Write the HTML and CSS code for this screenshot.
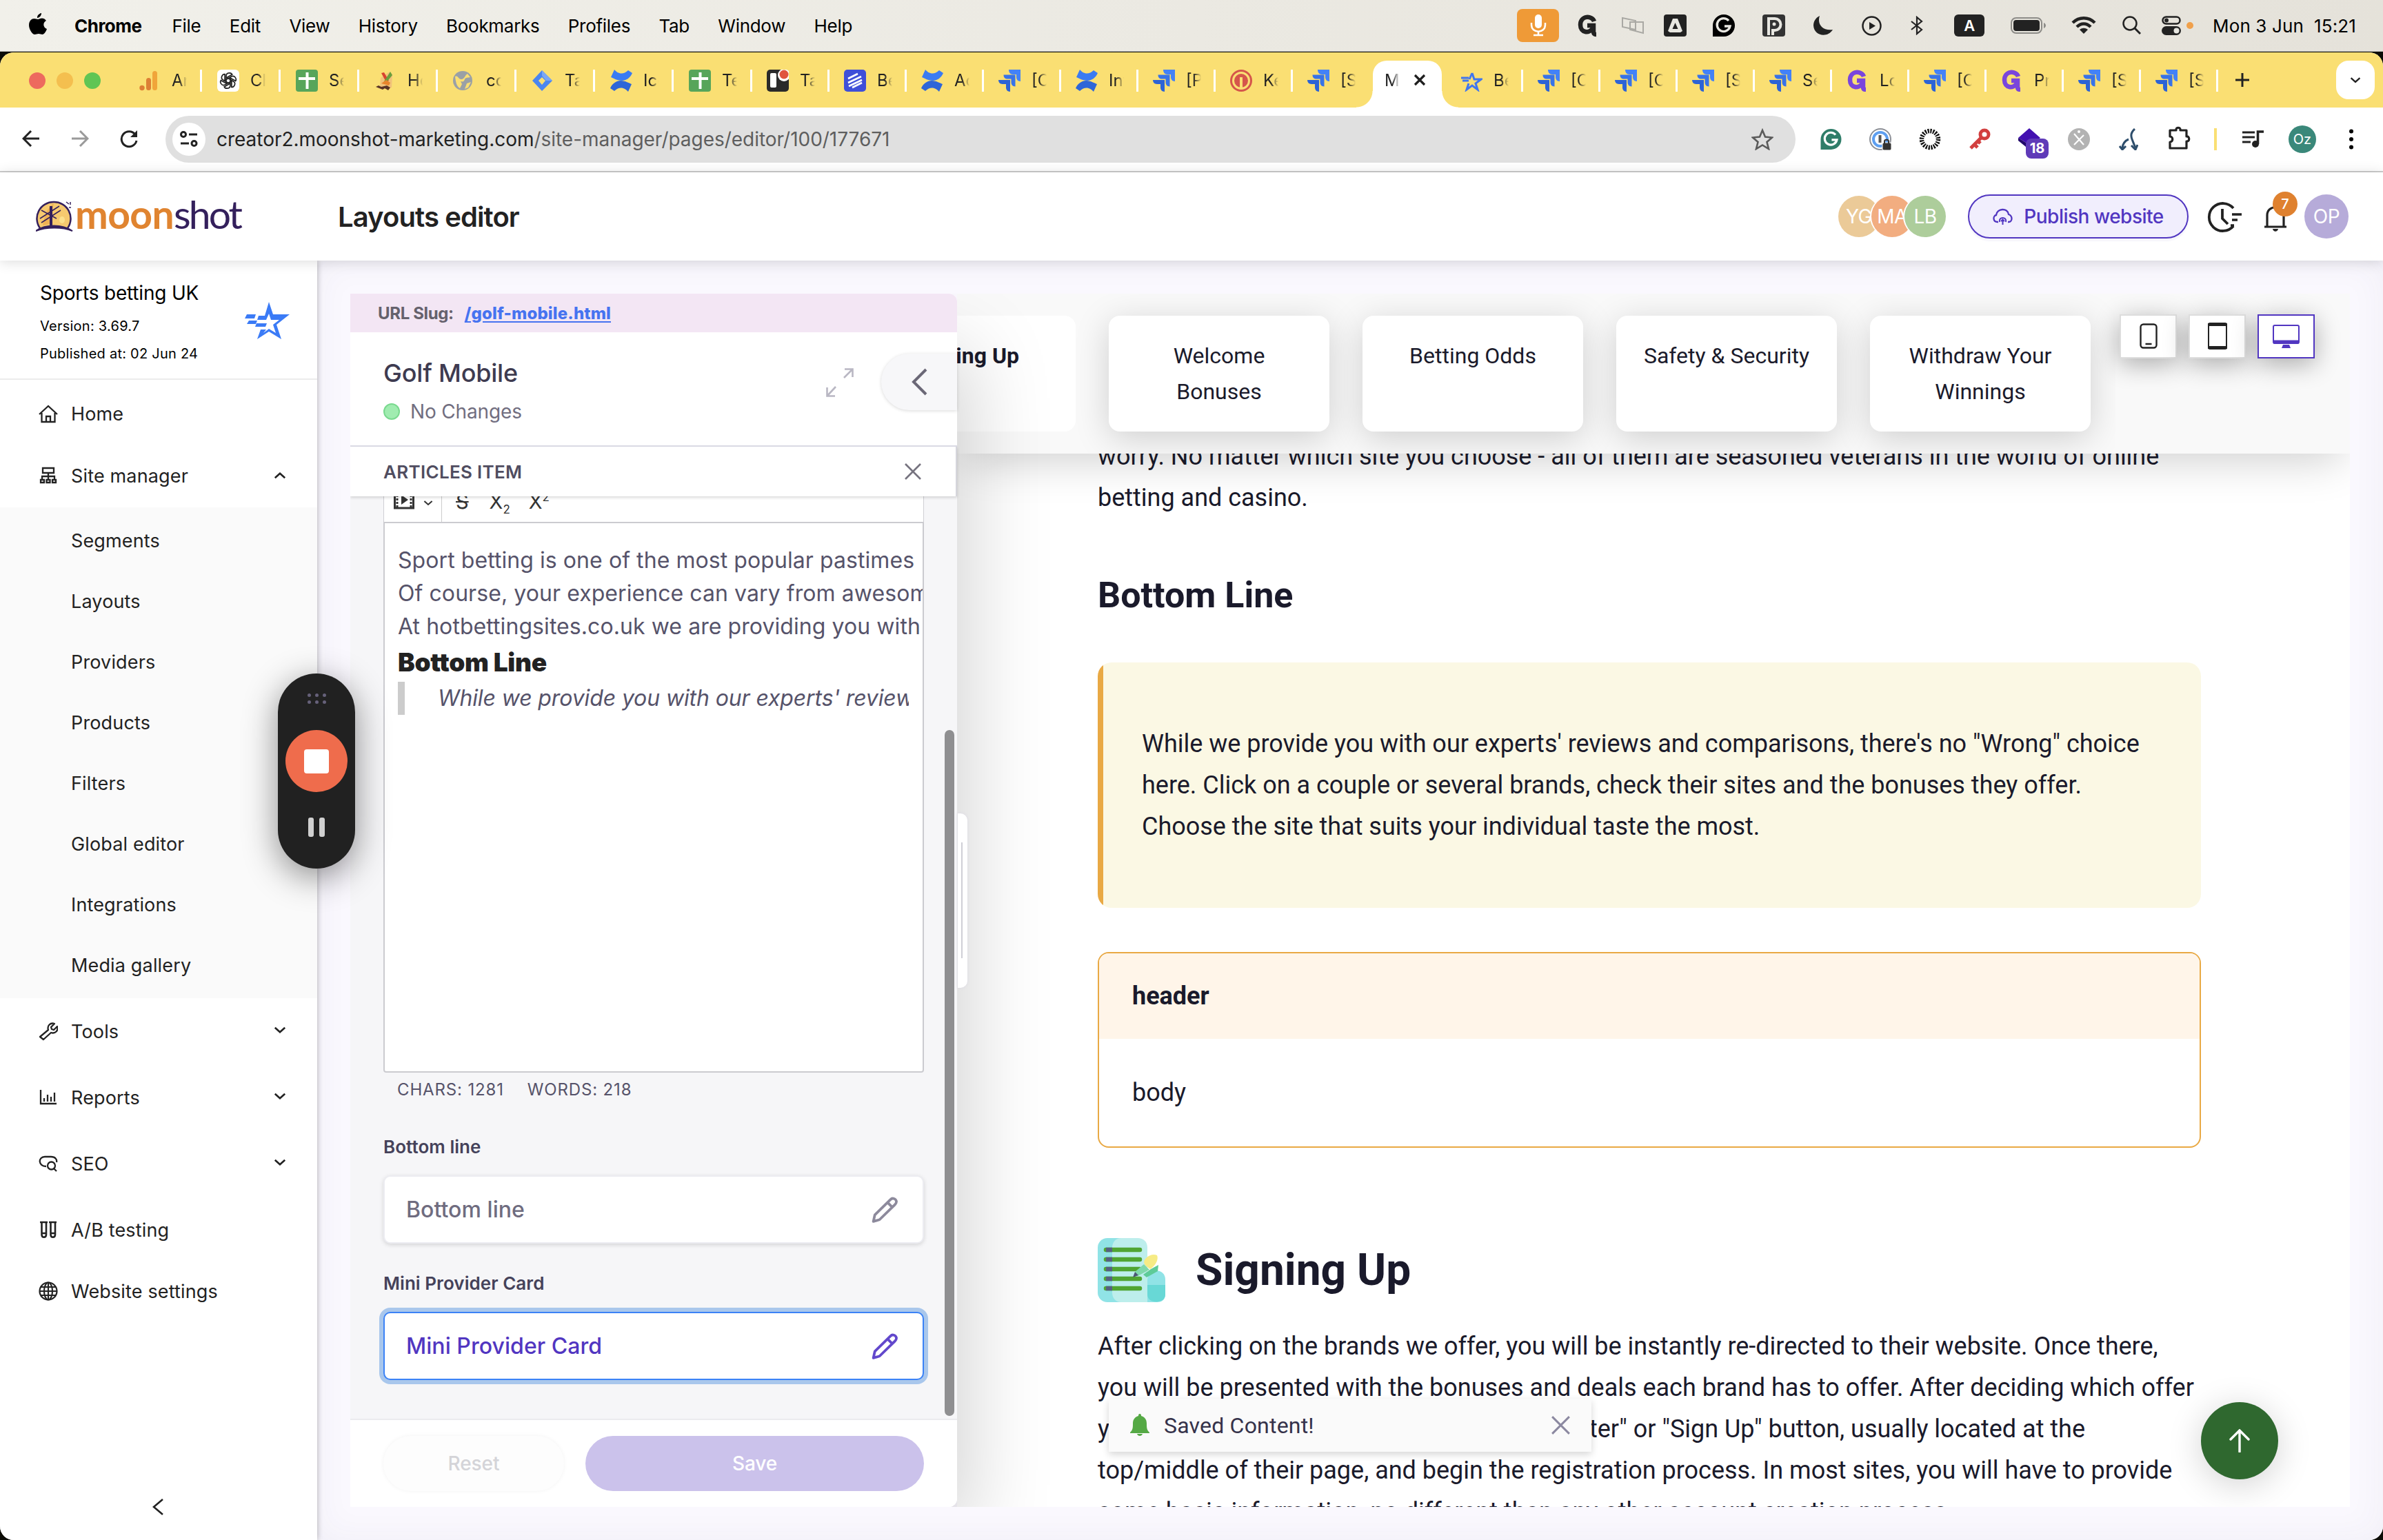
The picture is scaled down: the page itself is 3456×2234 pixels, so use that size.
FILE: index.html
```html
<!DOCTYPE html>
<html lang="en">
<head>
  <meta charset="UTF-8">
  <meta name="viewport" content="width=device-width, initial-scale=1">
  <title>Moonshot | Layouts editor</title>
  <link rel="stylesheet" href="styles.css">
</head>
<body>

  <!-- shared icons -->
  <svg class="defs" aria-hidden="true">
    <symbol id="f-analytics" viewBox="0 0 32 32"><rect x="20" y="2" width="7" height="28" rx="3.500" fill="#f0a53a"/><rect x="11" y="12" width="7" height="18" rx="3.500" fill="#dd7f35"/><circle cx="5" cy="26.500" r="3.700" fill="#dd7f35"/></symbol>
    <symbol id="f-gpt" viewBox="0 0 32 32"><rect width="32" height="32" rx="6" fill="#fff"/><g fill="none" stroke="#222" stroke-width="1.700"><path id="petal" d="M13 20V9.500c0-6 8-6 9-1.500M13 12l8-4.500"/><use href="#petal" transform="rotate(60 16 16)"/><use href="#petal" transform="rotate(120 16 16)"/><use href="#petal" transform="rotate(180 16 16)"/><use href="#petal" transform="rotate(240 16 16)"/><use href="#petal" transform="rotate(300 16 16)"/></g></symbol>
    <symbol id="f-sheets" viewBox="0 0 32 32"><rect width="32" height="32" rx="4" fill="#57a55a"/><path d="M4 13h24M16.500 4v24" stroke="#fff" stroke-width="4"/></symbol>
    <symbol id="f-paint" viewBox="0 0 32 32"><path d="M9 12l13-9 4 4-1 19-8 2-9-3z" fill="#f1c27a"/><path d="M10 5l4-1 7 12-4 2z" fill="#d8432f"/><path d="M23 3l3 5-9 11-3-2z" fill="#6a9f3c"/><path d="M10 20l7-5 6 4-2 4z" fill="#e8842c"/><path d="M2 25l4-2 4 2 8-2 5 3-3 4-5-3-3 2z" fill="#5a3426"/></symbol>
    <symbol id="f-globe" viewBox="0 0 32 32"><circle cx="14" cy="16" r="14" fill="#9aa0a6"/><path d="M3 10c5-2 4 4 9 4s5-6 9-8l4 5c-3 1-7 0-8 3s-2 4-6 3l2 4-3 6C5 24 4 18 3 10zM20 20l6-2-4 8-5 2z" fill="#fadf73"/></symbol>
    <symbol id="f-diamond" viewBox="0 0 32 32"><path d="M15 1l15 15-15 15L1 16z" fill="#4a86f0"/><path d="M15 1l15 15h-9l-6-7z" fill="#7ba7f5"/><path d="M15 11l5 5-5 6-5-6z" fill="#fadf73"/></symbol>
    <symbol id="f-conf" viewBox="0 0 32 32"><path d="M6 0c4 5 12 9 20 1l6 4c-3 7-9 11-15 11C10 16 4 12 1 11z" fill="#3a7bf2"/><path d="M26 32c-4-5-12-9-20-1l-6-4c3-7 9-11 15-11 7 0 13 4 16 5z" fill="#2e66d8"/></symbol>
    <symbol id="f-trello" viewBox="0 0 32 32"><rect width="32" height="32" rx="5" fill="#2a2a2a"/><rect x="5" y="5" width="9" height="21" rx="2" fill="#fff"/><circle cx="25" cy="8" r="9" fill="#fff"/><circle cx="25" cy="7" r="6.500" fill="#e0543f"/></symbol>
    <symbol id="f-blue" viewBox="0 0 32 32"><rect width="32" height="32" rx="5" fill="#3f4fd8"/><path d="M6 13l14-7M6 19l19-9M7 24l19-9M12 26l14-7" stroke="#fff" stroke-width="2.600"/></symbol>
    <symbol id="f-jira" viewBox="0 0 32 32"><path d="M15 0h17v17c-4 0-6-3-6-6V7h-5c-4 0-6-3-6-7z" fill="#4382f7"/><path d="M7.500 7.500h17v17c-4 0-6-3-6-6v-5h-5c-4 0-6-2-6-6z" fill="#3873e8"/><path d="M0 15h17v17c-4 0-6-3-6-6v-5H6c-4 0-6-3-6-6z" fill="#2c63d6"/></symbol>
    <symbol id="f-onepass" viewBox="0 0 32 32"><circle cx="16" cy="16" r="16" fill="#d5564b"/><circle cx="16" cy="16" r="11.500" fill="none" stroke="#fadf73" stroke-width="3"/><path d="M16 11v16" stroke="#fadf73" stroke-width="4"/></symbol>
    <symbol id="f-star" viewBox="0 0 32 32"><path d="M17 5l3 9h10l-8 6 3 9-8-6-8 6 3-9" fill="none" stroke="#3f76f0" stroke-width="3"/><path d="M17 5l-4 9M1 12h11M3 16h9" stroke="#3f76f0" stroke-width="3"/></symbol>
    <symbol id="f-g" viewBox="0 0 32 32"><path d="M25 10C22 1 5 1 5 15c0 12 13 13 18 5M15 16h9v9c0 3 1 4 4 4" fill="none" stroke="currentColor" stroke-width="6.500"/></symbol>
    <symbol id="chev" viewBox="0 0 20 12"><path d="M2 2.500l8 7 8-7" fill="none" stroke="currentColor" stroke-width="3"/></symbol>
    <symbol id="pencil" viewBox="0 0 36 36"><path d="M2.500 34l2-9L26 4c2.500-3 7-1.500 8 2 .5 2-.5 3.500-2 5L11 31.500zM22 8l7 7" fill="none" stroke="currentColor" stroke-width="3.600" stroke-linejoin="round"/></symbol>
    <symbol id="cross" viewBox="0 0 24 24"><path d="M1 1l22 22M23 1L1 23" fill="none" stroke="currentColor" stroke-width="2.600"/></symbol>
  </svg>

  <div class="menubar">
    <svg class="apple" viewBox="0 0 26 32"><path d="M18 0c.3 3-2.600 7-6 7C11.600 4 14.500.6 18 0zM13 9c1.400 0 3-1.500 6-1.500 2 0 4.500 1 6 3.500-5.500 3-4.500 10 1 12-1.500 4-4 8-6.500 8-2 0-3-1-5.500-1s-3.500 1-5.500 1C4.500 31 0 23 0 17.500 0 11 4 8 7.500 8 10 8 11.500 9 13 9z"/></svg>
    <b>Chrome</b><span>File</span><span>Edit</span><span>View</span><span>History</span><span>Bookmarks</span><span>Profiles</span><span>Tab</span><span>Window</span><span>Help</span>
    <div class="status">
      <div class="mic"><svg width="24" height="32" viewBox="0 0 24 32"><rect x="7" y="0" width="10" height="20" rx="5" fill="#fff"/><path d="M2 12v3c0 13 20 13 20 0v-3M12 25v5M5 30h14" fill="none" stroke="#fff" stroke-width="2.500"/></svg></div>
      <svg class="st-g" width="32" height="34"><use href="#f-g"/></svg>
      <svg class="st-screens" width="34" height="26" viewBox="0 0 34 26"><path d="M2 2l19 4v13l-19-4zM13 8h19v16l-19-5z" fill="none" stroke="#aaa9a4" stroke-width="2"/></svg>
      <svg class="st-a" width="33" height="32" viewBox="0 0 33 32"><rect width="33" height="32" rx="4" fill="#222"/><path d="M13 6h7l7 18-3 2H9l-3-2z" fill="#e8e7e1"/><path d="M16.500 12l4 9h-8z" fill="#222"/></svg>
      <svg class="st-gram" width="32" height="32" viewBox="0 0 32 32"><path d="M0 32V16a16 16 0 1 1 16 16z" fill="#000"/><path d="M23 9a9.500 9.500 0 1 0 2 8h-8" fill="none" stroke="#e8e7e1" stroke-width="3.400"/></svg>
      <svg class="st-p" width="33" height="32" viewBox="0 0 33 32"><rect width="33" height="32" rx="4" fill="#333"/><path d="M9 30V6h9a8 8 0 0 1 0 17h-3v7" fill="#333" stroke="#e8e7e1" stroke-width="4"/><circle cx="17" cy="14" r="2.500" fill="#e8e7e1"/></svg>
      <svg class="st-moon" width="28" height="28" viewBox="0 0 28 28"><path d="M9 0c-4 12 4 22 19 20C21 32 1 30 0 14 0 8 3 3 9 0z" fill="#222"/></svg>
      <svg class="st-play" width="29" height="29" viewBox="0 0 29 29"><circle cx="14.500" cy="14.500" r="13" fill="none" stroke="#222" stroke-width="2.500"/><path d="M11 9l9 5.500-9 5.500z" fill="#222"/></svg>
      <svg class="st-bt" width="18" height="28" viewBox="0 0 18 28"><path d="M1 8l15 12-7 6V2l7 6L1 20" fill="none" stroke="#222" stroke-width="2.200"/></svg>
      <div class="lang">A</div>
      <svg class="st-batt" width="52" height="24" viewBox="0 0 52 24"><rect x="1" y="1" width="44" height="22" rx="7" fill="none" stroke="#8d8c88" stroke-width="2"/><rect x="4" y="4" width="38" height="16" rx="4" fill="#222"/><path d="M48 8c4 2 4 6 0 8z" fill="#8d8c88"/></svg>
      <svg class="st-wifi" width="36" height="26" viewBox="0 0 36 26"><path d="M2 9c9-9 23-9 32 0M8 15c6-6 14-6 20 0" fill="none" stroke="#222" stroke-width="4.500"/><path d="M12 19c4-3 8-3 12 0l-6 6z" fill="#222"/></svg>
      <svg class="st-search" width="27" height="28" viewBox="0 0 27 28"><circle cx="11" cy="11" r="9.500" fill="none" stroke="#222" stroke-width="2.500"/><path d="M18 18l8 8" stroke="#222" stroke-width="3"/></svg>
      <svg class="st-control" width="28" height="28" viewBox="0 0 28 28"><rect x="1.500" y="1.500" width="25" height="10" rx="5" fill="none" stroke="#222" stroke-width="2.500"/><circle cx="7" cy="6.500" r="3" fill="#222"/><rect x="0" y="15" width="28" height="13" rx="6.500" fill="#222"/><circle cx="21.500" cy="21.500" r="4" fill="#e6e5df"/></svg>
      <i class="dot-orange"></i>
      <span class="clock">Mon 3 Jun&nbsp; 15:21</span>
    </div>
  </div>

  <div class="window">
    <div class="tabs">
      <div class="lights"><i class="red"></i><i class="yellow"></i><i class="green"></i></div>
      <div class="tab wide"><svg><use href="#f-analytics"/></svg><span>An</span></div>
      <div class="tab wide"><svg><use href="#f-gpt"/></svg><span>Ch</span></div>
      <div class="tab wide"><svg><use href="#f-sheets"/></svg><span>Se</span></div>
      <div class="tab wide"><svg><use href="#f-paint"/></svg><span>Ho</span></div>
      <div class="tab wide"><svg><use href="#f-globe"/></svg><span>co</span></div>
      <div class="tab wide"><svg><use href="#f-diamond"/></svg><span>Ta</span></div>
      <div class="tab wide"><svg><use href="#f-conf"/></svg><span>Ico</span></div>
      <div class="tab wide"><svg><use href="#f-sheets"/></svg><span>Te</span></div>
      <div class="tab"><svg><use href="#f-trello"/></svg><span>Ta</span></div>
      <div class="tab"><svg><use href="#f-blue"/></svg><span>Be</span></div>
      <div class="tab"><svg><use href="#f-conf"/></svg><span>Ac</span></div>
      <div class="tab"><svg><use href="#f-jira"/></svg><span>[C</span></div>
      <div class="tab"><svg><use href="#f-conf"/></svg><span>Int</span></div>
      <div class="tab"><svg><use href="#f-jira"/></svg><span>[P</span></div>
      <div class="tab"><svg><use href="#f-onepass"/></svg><span>Ke</span></div>
      <div class="tab no-sep"><svg><use href="#f-jira"/></svg><span>[S</span></div>
      <div class="tab active"><span>M</span><svg class="tab-x" viewBox="0 0 18 18"><path d="M2 2l14 14M16 2L2 16" stroke="#1f1f1f" stroke-width="3.200"/></svg></div>
      <div class="tab"><svg><use href="#f-star"/></svg><span>Be</span></div>
      <div class="tab"><svg><use href="#f-jira"/></svg><span>[C</span></div>
      <div class="tab"><svg><use href="#f-jira"/></svg><span>[C</span></div>
      <div class="tab"><svg><use href="#f-jira"/></svg><span>[S</span></div>
      <div class="tab"><svg><use href="#f-jira"/></svg><span>Se</span></div>
      <div class="tab g"><svg><use href="#f-g"/></svg><span>Lo</span></div>
      <div class="tab"><svg><use href="#f-jira"/></svg><span>[C</span></div>
      <div class="tab g"><svg><use href="#f-g"/></svg><span>Pr</span></div>
      <div class="tab"><svg><use href="#f-jira"/></svg><span>[S</span></div>
      <div class="tab"><svg><use href="#f-jira"/></svg><span>[S</span></div>
      <svg class="plus" viewBox="0 0 20 20"><path d="M10 0v20M0 10h20" stroke="#222" stroke-width="3"/></svg>
      <div class="tab-list"><svg width="16" height="10" viewBox="0 0 20 12"><use href="#chev"/></svg></div>
    </div>

    <div class="toolbar">
      <div class="nav-btns">
        <svg width="26" height="24" viewBox="0 0 26 24"><path d="M25 12H2M13 1L2 12l11 11" fill="none" stroke="#222" stroke-width="3"/></svg>
        <svg width="26" height="24" viewBox="0 0 26 24"><path d="M1 12h23M13 1l11 11-11 11" fill="none" stroke="#9a9a9a" stroke-width="3"/></svg>
        <svg width="26" height="26" viewBox="0 0 26 26"><path d="M24 15A11 11 0 1 1 22 6" fill="none" stroke="#222" stroke-width="3"/><path d="M25 0v10H15z" fill="#222"/></svg>
      </div>
      <div class="address">
        <div class="site-info"><svg width="26" height="24" viewBox="0 0 26 24"><path d="M13 5h12M1 18h12" stroke="#222" stroke-width="3"/><circle cx="5" cy="5" r="3.500" fill="none" stroke="#222" stroke-width="3"/><circle cx="20.500" cy="18" r="3.500" fill="none" stroke="#222" stroke-width="3"/></svg></div>
        <span class="url">creator2.moonshot-marketing.com<em>/site-manager/pages/editor/100/177671</em></span>
        <svg class="fav" width="32" height="32" viewBox="0 0 32 32"><path d="M16 3l4 9.500 10 1-7.500 6.500 2.500 10-9-5.500L7 30l2.500-10L2 13.500l10-1z" fill="none" stroke="#5b5b5b" stroke-width="2.600"/></svg>
      </div>
      <div class="exts">
        <svg width="31" height="30" viewBox="0 0 32 32"><path d="M0 32V16a16 16 0 1 1 16 16z" fill="#2f7d69"/><path d="M23 9a9.500 9.500 0 1 0 2 8h-8" fill="none" stroke="#fff" stroke-width="3.400"/></svg>
        <svg width="32" height="32" viewBox="0 0 32 32"><circle cx="16" cy="16" r="15" fill="#fff" stroke="#8c8f96" stroke-width="2"/><circle cx="16" cy="16" r="10" fill="none" stroke="#5e9ff0" stroke-width="4"/><path d="M15.500 10v11" stroke="#555" stroke-width="4"/><rect x="19" y="21" width="13" height="11" rx="2" fill="#333" stroke="#fff"/><path d="M22 22v-3c0-3 6-3 6 0v3" fill="none" stroke="#333" stroke-width="2"/></svg>
        <svg width="32" height="32" viewBox="0 0 32 32"><circle cx="16" cy="16" r="12" fill="none" stroke="#111" stroke-width="6.500" stroke-dasharray="2.200 1.570"/></svg>
        <svg width="32" height="32" viewBox="0 0 32 32"><circle cx="23" cy="9" r="6" fill="none" stroke="#d23f3f" stroke-width="5"/><path d="M18 14L3 29M8 23l5 5M13 18l4 4" stroke="#d23f3f" stroke-width="5"/></svg>
        <div class="ext-badge"><svg width="32" height="32" viewBox="0 0 32 32"><path d="M16 0l16 14-16 10L0 14z" fill="#4310b0"/><path d="M0 14l16 10v7L0 18z" fill="#22086b"/></svg><b>18</b></div>
        <svg width="32" height="32" viewBox="0 0 32 32"><circle cx="16" cy="16" r="16" fill="#b3b3b3"/><path d="M9 8l14 16M23 10L9 24" stroke="#fff" stroke-width="2.200"/><circle cx="16" cy="5" r="2" fill="#fff"/></svg>
        <svg class="ext-fork" width="28" height="32" viewBox="0 0 28 32"><path d="M23 1c-6 5-6 10-4 15s3 8 5 12M14 16C9 18 5 23 5 29" fill="none" stroke="#2d4d6b" stroke-width="3"/><path d="M1 26l4 5 5-5M18 25l6 6 3-7" fill="none" stroke="#2d4d6b" stroke-width="3"/></svg>
        <svg class="ext-puzzle" width="34" height="34" viewBox="0 0 34 34"><path d="M3 6h9c-1-5 7-5 6 0h9v9c5-1 5 8 0 7v10H3v-9c5 0 5-8 0-8z" fill="none" stroke="#222" stroke-width="3.200" stroke-linejoin="round"/></svg>
        <i class="ext-sep"></i>
        <svg class="ext-music" width="32" height="26" viewBox="0 0 32 26"><path d="M0 3h18M0 10h18M0 17h12" stroke="#222" stroke-width="3.200"/><circle cx="19" cy="20" r="5" fill="#222"/><path d="M22.500 20V2H31" fill="none" stroke="#222" stroke-width="3.600"/></svg>
        <div class="me">Oz</div>
        <svg class="ext-dots" width="6" height="30" viewBox="0 0 6 30"><circle cx="3" cy="3.500" r="3"/><circle cx="3" cy="15" r="3"/><circle cx="3" cy="26.500" r="3"/></svg>
      </div>
    </div>

    <header class="app-header">
      <div class="logo">
        <svg width="54" height="46" viewBox="0 0 54 46"><path d="M6 40A24 24 0 0 1 26 2a24 24 0 0 1 20 38" fill="#f6c96f" stroke="#34205c" stroke-width="2.500"/><path d="M26 4c-8 4-14 18-16 32l10-2z" fill="#e79a3c" opacity=".5"/><path d="M8 14L30 26M6 26l28-18M8 32L36 14" stroke="#34205c" stroke-width="1.500"/><path d="M22 8v28" stroke="#34205c" stroke-width="4"/><ellipse cx="38" cy="28" rx="4" ry="5" fill="#fde08c"/><path d="M0 44c14-10 38-10 53 0-14-6-38-6-53 0z" fill="#34205c" stroke="#34205c" stroke-width="2"/><path d="M44 2l4 3M50 2v4M48 10h3" stroke="#34205c" stroke-width="1.500"/></svg>
        <span class="moon">moon</span><span class="shot">shot</span>
      </div>
      <h1>Layouts editor</h1>
      <div class="header-right">
        <div class="avatars"><span class="av yg">YG</span><span class="av ma">MA</span><span class="av lb">LB</span></div>
        <button class="publish"><svg width="29" height="24" viewBox="0 0 29 24"><path d="M8 20H7C0 20 0 11 5 10 6 0 22-1 23 9c6 2 6 11 0 11h-1" fill="none" stroke="#5136c1" stroke-width="2.300"/><path d="M10 20c-2-8 11-8 9 0M14.500 24v-7M12 19l2.500-2.500L17 19" fill="none" stroke="#5136c1" stroke-width="2"/></svg>Publish website</button>
        <svg class="history" width="50" height="44" viewBox="0 0 50 44"><path d="M38 9A20 20 0 1 0 38 35" fill="none" stroke="#222" stroke-width="3.800"/><path d="M22 10v14l8 8" fill="none" stroke="#222" stroke-width="3.800"/><path d="M36 18h14M36 26h8M34 34h5" stroke="#222" stroke-width="3.600"/></svg>
        <div class="bell"><svg width="34" height="40" viewBox="0 0 34 40"><path d="M1 33h32M5 32V16C5 1 29 1 29 16v16" fill="none" stroke="#222" stroke-width="3.200"/><path d="M13 36h8c-1 5-7 5-8 0z" fill="#222"/></svg><b>7</b></div>
        <span class="av op">OP</span>
      </div>
    </header>

    <div class="app">
      <aside class="sidebar">
        <div class="site">
          <div>
            <p class="site-name">Sports betting UK</p>
            <p>Version: 3.69.7</p>
            <p>Published at: 02 Jun 24</p>
          </div>
          <svg width="66" height="56" viewBox="0 0 66 56"><path fill-rule="evenodd" d="M35 1l6 18h24L46 34l7 21-18-11-17 11 5-14h8l-4 5 8-6 10 6-4-12 9-7H38l-3-9-4 9H18l2-6h9zM17 32h15l-2 5H15z" fill="#3b7bf6"/><path d="M3 19h13l-2 6H0zM6 28h12l-2 5H3z" fill="#3b7bf6"/></svg>
        </div>
        <nav>
          <a class="item home"><svg viewBox="0 0 28 28"><path d="M1 15L14 3l13 12M4.500 13v13h19V13M11 26v-8h6v8" fill="none" stroke="#222" stroke-width="2.300"/></svg>Home</a>
          <a class="item manager"><svg viewBox="0 0 28 28"><path d="M6 3h16v7H6zM14 10v9M5 19v-4h18v4M3 20h5v4H3zM11.500 20h5v4h-5zM20 20h5v4h-5z" fill="none" stroke="#222" stroke-width="2.300"/></svg>Site manager<svg class="arrow up"><use href="#chev"/></svg></a>
          <div class="sub">
            <a>Segments</a><a>Layouts</a><a>Providers</a><a>Products</a><a>Filters</a><a>Global editor</a><a>Integrations</a><a>Media gallery</a>
          </div>
          <a class="item"><svg viewBox="0 0 28 28"><path d="M2 22L14 12c-2-6 3-11 9-9l-5 5 1 3 3 1 5-5c2 6-3 11-9 9L7 26z" fill="none" stroke="#222" stroke-width="2.300" stroke-linejoin="round"/></svg>Tools<svg class="arrow"><use href="#chev"/></svg></a>
          <a class="item"><svg viewBox="0 0 28 28"><path d="M3 3v20h23M8 20v-5M13 20v-10M18 20v-7M23 20V7" fill="none" stroke="#222" stroke-width="2.300"/></svg>Reports<svg class="arrow"><use href="#chev"/></svg></a>
          <a class="item"><svg viewBox="0 0 28 28"><path d="M11 18C-1 18-1 4 9 4h9c6 0 9 4 8 8" fill="none" stroke="#222" stroke-width="2.300"/><circle cx="18.500" cy="17" r="5.500" fill="none" stroke="#222" stroke-width="2.300"/><path d="M22 21l4 4" stroke="#222" stroke-width="2.300"/></svg>SEO<svg class="arrow"><use href="#chev"/></svg></a>
          <a class="item"><svg viewBox="0 0 28 28"><path d="M2 3h11M4.500 3v18c0 5 6.500 5 6.500 0V3M15 3h11M17.500 3v18c0 5 6.500 5 6.500 0V3M4.500 19h6.500M17.500 19h6.500" fill="none" stroke="#222" stroke-width="2.600"/></svg>A/B testing</a>
          <a class="item settings"><svg viewBox="0 0 28 28"><g fill="none" stroke="#222" stroke-width="2.200"><circle cx="14" cy="14" r="12.500"/><ellipse cx="14" cy="14" rx="6" ry="12.500"/><path d="M14 1v26M1 14h26M3 8h22M3 20h22"/></g></svg>Website settings</a>
        </nav>
        <svg class="collapse" width="16" height="24" viewBox="0 0 16 24"><path d="M15 1L2 12l13 11" fill="none" stroke="#222" stroke-width="2.600"/></svg>
      </aside>

      <main>
        <div class="workspace">
          <section class="editor">
            <div class="slug">URL Slug: <a>/golf-mobile.html</a></div>
            <div class="page-head">
              <div>
                <h2>Golf Mobile</h2>
                <p><i></i>No Changes</p>
              </div>
              <svg class="expand" width="40" height="42" viewBox="0 0 40 42"><path d="M26 14L39 1M27 1.500h11.500V13M14 27L1 41M1.500 28v12.500H13" fill="none" stroke="#b9b7c3" stroke-width="2.600"/></svg>
              <div class="fold"><svg width="24" height="40" viewBox="0 0 24 40"><path d="M22 2L4 20l18 18" fill="none" stroke="#6b6877" stroke-width="4"/></svg></div>
            </div>
            <div class="item-head"><span>ARTICLES ITEM</span><svg width="24" height="24"><use href="#cross"/></svg></div>
            <div class="form">
              <div class="rte-bar">
                <svg width="30" height="34" viewBox="0 0 30 34"><path d="M1.500 0v29h27V0" fill="none" stroke="#333" stroke-width="3"/><path d="M5 0v28M25 0v28" stroke="#333" stroke-width="3" stroke-dasharray="3 2"/><path d="M11 10l10 7-10 7z" fill="#333"/></svg>
                <svg class="rte-chev" width="14" height="9"><use href="#chev"/></svg>
                <i></i>
                <s>S</s>
                <span>X<sub>2</sub></span>
                <span>X<sup>2</sup></span>
              </div>
              <div class="rte">
                <p>Sport betting is one of the most popular pastimes</p>
                <p>Of course, your experience can vary from awesome</p>
                <p>At hotbettingsites.co.uk we are providing you with</p>
                <h3>Bottom Line</h3>
                <blockquote>While we provide you with our experts' reviews</blockquote>
              </div>
              <div class="counts"><span>CHARS: 1281</span><span>WORDS: 218</span></div>
              <label>Bottom line</label>
              <div class="pick">Bottom line<svg width="38" height="38"><use href="#pencil"/></svg></div>
              <label>Mini Provider Card</label>
              <div class="pick focus">Mini Provider Card<svg width="38" height="38"><use href="#pencil"/></svg></div>
              <i class="scroll"></i>
            </div>
            <div class="actions"><button class="reset">Reset</button><button class="save">Save</button></div>
            <div class="resizer"><i></i></div>
          </section>

          <section class="preview">
            <div class="toc">
              <div class="toc-list">
                <div class="toc-card current">Signing Up</div>
                <div class="toc-card">Welcome Bonuses</div>
                <div class="toc-card">Betting Odds</div>
                <div class="toc-card">Safety &amp; Security</div>
                <div class="toc-card">Withdraw Your Winnings</div>
              </div>
              <div class="devices">
                <div><svg width="26" height="38" viewBox="0 0 26 38"><rect x="1.500" y="1.500" width="23" height="34" rx="4" fill="none" stroke="#222" stroke-width="2.400"/><path d="M8.500 30h9" stroke="#222" stroke-width="2.500"/></svg></div>
                <div><svg width="28" height="40" viewBox="0 0 28 40"><rect x="1" y="1" width="26" height="37" rx="2" fill="#fff" stroke="#222" stroke-width="2"/><path d="M0 3h28M0 36h28" stroke="#222" stroke-width="4"/></svg></div>
                <div class="on"><svg width="40" height="36" viewBox="0 0 40 36"><rect x="1" y="2" width="37" height="26" rx="2" fill="#fff" stroke="#5136c1" stroke-width="2"/><path d="M1 26h37" stroke="#5136c1" stroke-width="5"/><path d="M15 30h9l2 5H13z" fill="#5136c1"/></svg></div>
              </div>
            </div>
            <article>
              <p class="first">worry. No matter which site you choose - all of them are seasoned veterans in the world of online<br>betting and casino.</p>
              <h3>Bottom Line</h3>
              <div class="quote">While we provide you with our experts' reviews and comparisons, there's no "Wrong" choice<br>here. Click on a couple or several brands, check their sites and the bonuses they offer.<br>Choose the site that suits your individual taste the most.</div>
              <div class="box"><div class="box-head">header</div><div class="box-body">body</div></div>
              <div class="title">
                <svg width="98" height="94" viewBox="0 0 98 94"><rect width="50" height="93" rx="14" fill="#90e3e6"/><path d="M34 0h24c8 0 14 5 14 14v79H34c-8 0-13-6-13-14V14C21 6 26 0 34 0z" fill="#bdeeec"/><path d="M72 93V60c0-17 26-17 26 0v22c0 8-6 11-12 11z" fill="#90e3e6"/><path d="M72 68h26v14c0 14-26 14-26 0z" fill="#68d8d6"/><path d="M12 17h49M12 31h49M12 45h49M12 59h49M12 73h49" stroke="#50a532" stroke-width="6.500" stroke-linecap="round"/><path d="M12 17h9M12 31h9M12 45h9M12 59h9M12 73h9" stroke="#566180" stroke-width="6.500"/><path d="M54 49l13-11 8 8-17 9z" fill="#7fd8ab"/><path d="M66 53l11-8 11-6-1 9-16 9z" fill="#5ecb98"/><path d="M76 45c-8-5-12-10-6-16 5-5 12-6 16-4 3 6-3 16-10 20z" fill="#f6eb85"/><path d="M51 57l3-8 5 5z" fill="#4b5674"/></svg>
                <h2>Signing Up</h2>
              </div>
              <p>After clicking on the brands we offer, you will be instantly re-directed to their website. Once there,<br>you will be presented with the bonuses and deals each brand has to offer. After deciding which offer<br><span class="covered">you</span>ter" or "Sign Up" button, usually located at the<br>top/middle of their page, and begin the registration process. In most sites, you will have to provide<br>some basic information, no different than any other account creation process.</p>
            </article>
            <div class="toast"><svg width="28" height="33" viewBox="0 0 28 33"><path d="M14 0c2 0 2 2 2 3 6 2 8 6 8 11 0 6 0 9 4 13v1H0v-1c4-4 4-7 4-13 0-5 2-9 8-11 0-1 0-3 2-3zM10 29h8c-1 4-7 4-8 0z" fill="#55a945"/></svg>Saved Content!<svg class="toast-x" width="27" height="27"><use href="#cross"/></svg></div>
            <div class="to-top"><svg width="30" height="34" viewBox="0 0 30 34"><path d="M15 33V2M2 15L15 2l13 13" fill="none" stroke="#fff" stroke-width="3.400" stroke-linecap="round"/></svg></div>
          </section>
        </div>
      </main>
    </div>
  </div>

  <!-- floating screen recorder control -->
  <div class="recorder">
    <div class="grip"><i></i><i></i><i></i><i></i><i></i><i></i></div>
    <div class="stop"><i></i></div>
    <div class="pause"><i></i><i></i></div>
  </div>

</body>
</html>
```
FILE: styles.css
```css
:root {
  --yellow: #fadf73;
  --purple: #5136c1;
  --ink: #1a1a2b;
  --text: #222;
  --ui: Inter, "Liberation Sans", sans-serif;
}
*, *::before, *::after { box-sizing: border-box; margin: 0; padding: 0; }
body {
  width: 3456px; height: 2234px;
  overflow: hidden;
  position: relative;
  display: flex; flex-direction: column;
  font-family: var(--ui);
  color: var(--text);
  background: #0c0c06;
}
svg { display: block; flex: none; }
.defs { position: absolute; width: 0; height: 0; }
button { font: inherit; border: none; }

/* macOS menu bar */
.menubar {
  flex: none; height: 75px;
  display: flex; align-items: center;
  padding: 0 36px 0 42px;
  background: linear-gradient(90deg, #f1f0ea, #e5e2da);
  border-bottom: 1px solid #bdbbb4;
  font-size: 26px; letter-spacing: -.3px; color: #000;
}
.apple { width: 26px; height: 32px; margin: -4px 40px 0 0; }
.menubar b { font-weight: 700; margin-right: 44px; letter-spacing: -.5px; }
.menubar > span { margin-right: 41.400px; }
.status { margin-left: auto; display: flex; align-items: center; }
.mic { width: 61px; height: 48px; margin-right: 26px; border-radius: 8px; background: #ef9a37; display: flex; align-items: center; justify-content: center; }
.st-g { margin-right: 32px; color: #222; }
.st-screens { margin-right: 28px; }
.st-a { margin-right: 38px; }
.st-gram { margin-right: 40px; }
.st-p { margin-right: 41px; }
.st-moon { margin-right: 42px; }
.st-play { margin-right: 42px; }
.st-bt { margin-right: 45px; }
.lang { width: 44px; height: 32px; margin-right: 38px; border-radius: 6px; background: #222; color: #fff; font-size: 22px; font-weight: 600; text-align: center; line-height: 32px; }
.st-batt { margin-right: 36px; }
.st-wifi { margin-right: 38px; }
.st-search { margin-right: 30px; }
.st-control { margin-right: 8px; }
.dot-orange { width: 10px; height: 10px; border-radius: 50%; background: #f0a04b; margin-right: 28px; }
.clock { width: 211px; white-space: nowrap; letter-spacing: .15px; }

.window {
  flex: 1; min-height: 0;
  display: flex; flex-direction: column;
  margin-top: 1px;
  border-radius: 20px;
  overflow: hidden;
  background: #fff;
}

/* tab strip */
.tabs { flex: none; height: 80px; display: flex; align-items: center; background: var(--yellow); padding: 0 12px 0 42px; }
.lights { display: flex; gap: 16px; width: 137px; margin-top: 2px; }
.lights i { width: 24px; height: 24px; border-radius: 50%; }
.red { background: #ed6a5e; }
.yellow { background: #f4bf4f; }
.green { background: #61c554; }
.tab { flex: none; width: 112px; height: 32px; padding-left: 21px; display: flex; align-items: center; border-right: 3px solid #fff; margin-top: 1px; }
.tab.wide { width: 114px; padding-left: 22px; }
.tab svg { width: 32px; height: 32px; margin-right: 16px; }
.tab span { width: 22px; overflow: hidden; white-space: nowrap; font-size: 24px; mask-image: linear-gradient(90deg, #000 50%, transparent); }
.tab.g { color: #7a45dc; }
.tab.g span { color: var(--text); }
.tab.no-sep { border-color: transparent; margin-right: 4px; }
.tab.active { width: 100px; height: 68px; margin: 12px 6px 0 0; padding: 0 0 12px 17px; border: none; border-radius: 20px 20px 0 0; background: #fff; position: relative; }
.tab.active::before, .tab.active::after { content: ""; position: absolute; bottom: 0; width: 24px; height: 24px; }
.tab.active::before { left: -24px; background: radial-gradient(circle at 0 0, transparent 23px, #fff 24px); }
.tab.active::after { right: -24px; background: radial-gradient(circle at 100% 0, transparent 23px, #fff 24px); }
.tab.active .tab-x { width: 18px; height: 18px; margin: 0 0 0 20px; }
.plus { width: 20px; height: 20px; margin-left: 25px; }
.tab-list { width: 56px; height: 56px; margin-left: auto; border-radius: 18px; background: #fff; display: flex; align-items: center; justify-content: center; }

/* address bar */
.toolbar { flex: none; height: 94px; display: flex; align-items: center; background: #fff; border-bottom: 2px solid #ccc; padding: 0 0 0 32px; }
.nav-btns { display: flex; gap: 45px; width: 208px; }
.address { width: 2364px; height: 68px; border-radius: 34px; background: #e0e0e0; display: flex; align-items: center; padding: 0 32px 0 10px; }
.site-info { width: 48px; height: 48px; border-radius: 50%; background: #fff; display: flex; align-items: center; justify-content: center; }
.url { margin-left: 16px; font-size: 28px; letter-spacing: -.03px; }
.url em { font-style: normal; color: #5e5e5e; }
.fav { margin-left: auto; }
.exts { flex: 1; margin-left: 36px; display: flex; align-items: center; gap: 40px; }
.ext-badge { position: relative; }
.ext-badge b { position: absolute; left: 11px; top: 15px; width: 33px; height: 29px; border-radius: 8px; background: #5f3ab8; color: #fff; font-size: 20px; line-height: 29px; text-align: center; }
.ext-fork { margin-left: 2px; }
.ext-puzzle { margin: -4px -7px 0 3px; }
.ext-sep { width: 4px; height: 32px; margin-right: -3px; background: var(--yellow); }
.ext-music { margin-right: -5px; }
.ext-dots { margin-left: 8px; }
.me { width: 40px; height: 40px; border-radius: 50%; background: #3a887a; color: #fff; font-size: 20px; line-height: 40px; text-align: center; }

/* application header */
.app-header { flex: none; height: 128px; display: flex; align-items: center; padding: 0 50px 0 52px; background: #fff; position: relative; z-index: 3; box-shadow: 0 2px 18px rgba(0,0,0,.14); }
.logo { width: 438px; display: flex; align-items: center; font-family: Lato, sans-serif; font-size: 57px; line-height: 60px; }
.logo .moon { color: #e08430; font-weight: 700; letter-spacing: -.6px; margin: -8px 0 0 3px; }
.logo .shot { color: #34205c; letter-spacing: -2.900px; margin-top: -8px; }
.app-header h1 { font-size: 40px; font-weight: 600; letter-spacing: -.9px; }
.header-right { margin-left: auto; display: flex; align-items: center; }
.avatars { display: flex; margin-right: 32px; }
.av { width: 60px; height: 60px; border-radius: 50%; color: #fff; font-size: 28px; line-height: 60px; text-align: center; letter-spacing: -.5px; }
.avatars .av + .av { margin-left: -12px; box-shadow: -2px 0 0 #fff; }
.yg { background: #ebca98; }
.ma { background: #f2ad80; }
.lb { background: #adcd9b; }
.op { width: 64px; height: 64px; line-height: 64px; background: #b6abd9; }
.publish { width: 320px; height: 64px; margin-right: 27px; border: 2px solid var(--purple); border-radius: 32px; background: #f1eefd; color: var(--purple); font-size: 28px; font-weight: 500; letter-spacing: -.5px; display: flex; align-items: center; justify-content: center; gap: 16px; white-space: nowrap; box-shadow: 0 4px 2px #f6f5fb; }
.history { margin: 2px 32px 0 0; }
.bell { position: relative; margin: 4px 25px 0 0; }
.bell b { position: absolute; left: 13px; top: -18px; width: 36px; height: 36px; border-radius: 50%; background: #df812f; color: #fff; font-size: 20px; font-weight: 500; line-height: 36px; text-align: center; }

.app { flex: 1; min-height: 0; display: flex; }

/* left menu */
.sidebar { flex: none; width: 460px; display: flex; flex-direction: column; background: #fff; position: relative; z-index: 1; box-shadow: 0 0 8px rgba(0,0,0,.3); }
.site { flex: none; height: 173px; padding: 28px 39px 0 58px; display: flex; justify-content: space-between; border-bottom: 2px solid #ececec; color: #000; }
.site p { font-size: 20px; line-height: 40px; white-space: nowrap; letter-spacing: .25px; }
.site .site-name { font-size: 28px; line-height: 38px; margin-bottom: 9px; letter-spacing: -.2px; }
.site svg { margin-top: 31px; }
.sidebar nav { padding-top: 5px; font-size: 27px; letter-spacing: .15px; }
.item { display: flex; align-items: center; height: 96px; padding: 0 45px 0 56px; }
.item > svg:first-child { width: 28px; height: 28px; margin-right: 19px; }
.item .arrow { width: 18px; height: 12px; margin: -4px 0 0 auto; }
.item .arrow.up { transform: scaleY(-1); margin-top: 0; }
.item.home { height: 88px; }
.item.manager { height: 92px; }
.item.settings { height: 82px; }
.sub { background: #fafafa; padding: 5px 0 3px 103px; height: 712px; }
.sub a { display: block; height: 88px; line-height: 88px; }
.collapse { margin: auto 0 36px 221px; }

main { flex: 1; padding: 48px; background: #faf8fe; box-shadow: inset 0 0 50px rgba(60,50,90,.05); }
.workspace { height: 1760px; display: flex; overflow: hidden; }

/* editor panel */
.editor { flex: none; width: 880px; display: flex; flex-direction: column; position: relative; z-index: 2; background: #fff; border-radius: 0 12px 12px 0; box-shadow: 40px 60px 110px -20px rgba(0,0,0,.17); }
.slug { flex: none; height: 56px; padding-left: 40px; display: flex; align-items: center; gap: 16px; background: #f3e6f4; border-top-right-radius: 12px; font-size: 24px; font-weight: 700; color: #65616c; letter-spacing: -.35px; }
.slug a { color: #4673f0; text-decoration: underline; text-decoration-thickness: 2px; text-underline-offset: 3px; font-weight: 800; letter-spacing: .15px; }
.page-head { flex: none; height: 166px; padding: 31px 0 0 48px; display: flex; border-bottom: 2px solid #dcdce6; }
.page-head h2 { font-size: 36px; font-weight: 500; line-height: 56px; color: #3e3b50; letter-spacing: -.2px; }
.page-head p { font-size: 28px; line-height: 56px; color: #716e7f; letter-spacing: -.15px; display: flex; align-items: center; }
.page-head p i { width: 24px; height: 24px; margin-right: 15px; border-radius: 50%; background: #a0ecb0; border: 2px solid #7ad98f; }
.expand { margin: 21px 40px 0 auto; }
.fold { width: 110px; height: 82px; padding-left: 43px; border-radius: 41px 0 0 41px; background: #f7f7f9; box-shadow: 0 1px 5px rgba(0,0,0,.15); display: flex; align-items: center; }
.item-head { flex: none; height: 72px; padding: 0 50px 0 48px; display: flex; align-items: center; justify-content: space-between; font-size: 26px; font-weight: 600; color: #504d60; letter-spacing: .3px; border-right: 2px solid #d5d5dc; box-shadow: 0 2px 4px rgba(0,0,0,.15); position: relative; z-index: 1; }
.item-head svg { color: #76737f; }
.form { flex: 1; min-height: 0; padding: 0 48px; background: #f6f6f8; position: relative; display: flex; flex-direction: column; overflow: hidden; }
.rte-bar { flex: none; height: 37px; padding-left: 14px; display: flex; background: #fff; border: solid #cfcfd4; border-width: 0 1px; color: #333; overflow: hidden; }
.rte-bar > svg:first-child { margin-top: -12px; }
.rte-chev { margin: 5px 12px 0 13px; }
.rte-bar i { width: 1px; background: #ccc; margin-right: 20px; }
.rte-bar s, .rte-bar span { line-height: 16px; margin-right: 27px; font-size: 29px; }
.rte-bar s { margin-right: 30px; }
.rte-bar sub, .rte-bar sup { font-size: 17px; line-height: 0; }
.rte { flex: none; height: 799px; padding: 30px 0 0 19px; background: #fff; border: 2px solid #cbcbd0; border-radius: 0 0 4px 4px; overflow: hidden; font-size: 32px; line-height: 48px; color: #56536a; white-space: nowrap; }
.rte p { letter-spacing: .07px; }
.rte h3 { font-size: 37px; font-weight: 900; line-height: 56px; color: #222; letter-spacing: -.3px; }
.rte blockquote { height: 48px; margin-right: 20px; padding-left: 48px; border-left: 10px solid #ccc; font-style: italic; overflow: hidden; letter-spacing: -.12px; }
.counts { flex: none; display: flex; gap: 34px; height: 50px; padding-left: 20px; line-height: 49px; font-size: 24px; color: #56536a; letter-spacing: .85px; }
.form label { flex: none; display: block; height: 89px; padding-top: 35px; font-size: 26px; font-weight: 600; line-height: 26px; color: #45425a; letter-spacing: .05px; margin-top: 10px; }
.pick { flex: none; height: 99px; padding: 0 36px 0 31px; display: flex; align-items: center; justify-content: space-between; border-radius: 10px; background: #fff; border: 2px solid #ececf1; box-shadow: 0 2px 6px rgba(0,0,0,.14); font-size: 32px; font-weight: 500; color: #6f6c7f; letter-spacing: .05px; }
.pick svg { color: #8d8a9c; }
.pick.focus { border-color: #3b82f6; color: var(--purple); box-shadow: 0 0 0 6px #a9c7ec; }
.pick.focus svg { color: #6248cc; }
.scroll { position: absolute; right: 4px; top: 339px; width: 14px; height: 995px; border-radius: 7px; background: #8f8f91; }
.actions { flex: none; height: 128px; padding: 23px 48px 0; display: flex; gap: 31px; border-top: 2px solid #ebebee; border-radius: 0 0 12px 0; background: #fff; }
.actions button { height: 80px; border-radius: 40px; font-size: 28px; font-weight: 500; letter-spacing: -.1px; }
.reset { width: 262px; background: #fdfdfd; color: #d4d4d8; box-shadow: 0 0 6px rgba(0,0,0,.05); }
.save { flex: 1; background: #cbc2eb; color: #fff; }
.resizer { position: absolute; left: 881px; top: 754px; width: 14px; height: 253px; border-radius: 0 10px 10px 0; background: #fff; box-shadow: 0 0 4px #dcdae4; padding: 42px 0 0 5px; }
.resizer i { display: block; width: 2px; height: 168px; background: #cfcfd6; }

/* site preview */
.preview { flex: 1; position: relative; overflow: hidden; background: #fff; font-family: Roboto, sans-serif; color: var(--ink); }
.toc { height: 232px; display: flex; position: relative; z-index: 1; background: #f9f9f9; box-shadow: 0 20px 60px -12px rgba(0,0,0,.2); }
.toc-list { width: 1680px; padding: 32px 36px 0 0; display: flex; justify-content: flex-end; gap: 48px; overflow: hidden; }
.toc-card { flex: none; width: 320px; height: 168px; padding: 32px 34px; border-radius: 16px; background: #fff; box-shadow: 0 10px 50px rgba(0,0,0,.17); font-size: 32px; line-height: 52px; text-align: center; }
.toc-card.current { font-weight: 700; box-shadow: none; }
.devices { padding: 30px 0 0 6px; display: flex; gap: 17px; }
.devices div { width: 83px; height: 64px; display: flex; align-items: center; justify-content: center; background: #fff; border: 2px solid #ddd; box-shadow: 0 8px 36px rgba(0,0,0,.32); }
.devices .on { border-color: var(--purple); }
article { width: 1616px; margin: -26px 0 0 204px; font-size: 36px; line-height: 60px; letter-spacing: -.01px; white-space: nowrap; }
article h3 { margin-top: 82px; font-size: 52px; line-height: 60px; }
.quote { width: 1600px; height: 356px; margin-top: 67px; padding: 88px 64px; border-radius: 20px; background: linear-gradient(90deg, #e9a944 8px, #fbf8e4 8px); }
.box { width: 1600px; height: 284px; margin-top: 64px; border: 2px solid #e9a944; border-radius: 16px; overflow: hidden; }
.box-head { height: 124px; padding: 32px 48px; background: #fff5e9; font-weight: 700; }
.box-body { padding: 48px; }
.title { margin: 131px 0 34px; height: 93px; display: flex; align-items: center; gap: 44px; }
.title h2 { font-size: 64px; }
.covered { display: inline-block; width: 713px; }
.toast { position: absolute; left: 220px; top: 1603px; width: 700px; height: 77px; padding: 0 31px; display: flex; align-items: center; background: #fafafa; box-shadow: 0 4px 10px rgba(0,0,0,.16); font-size: 32px; color: #35324a; letter-spacing: .2px; }
.toast > svg:first-child { margin-right: 21px; }
.toast-x { margin-left: auto; color: #8b88a0; }
.to-top { position: absolute; left: 1804px; top: 1608px; width: 112px; height: 112px; border-radius: 50%; background: #2f682f; display: flex; align-items: center; justify-content: center; box-shadow: 0 8px 50px rgba(0,0,0,.18); }

/* recorder pill */
.recorder { position: absolute; left: 403px; top: 977px; width: 112px; height: 283px; border-radius: 56px; background: #212121; z-index: 10; display: flex; flex-direction: column; align-items: center; padding-top: 29px; box-shadow: 0 12px 50px rgba(0,0,0,.45); }
.grip { display: grid; grid-template-columns: repeat(3, 5px); gap: 5px 6px; }
.grip i { width: 5px; height: 5px; border-radius: 50%; background: #66617a; }
.stop { width: 90px; height: 90px; margin-top: 38px; border-radius: 50%; background: #ef6c4c; display: flex; align-items: center; justify-content: center; }
.stop i { width: 36px; height: 35px; border-radius: 4px; background: #fff; }
.pause { display: flex; gap: 8px; margin-top: 37px; }
.pause i { width: 8px; height: 28px; border-radius: 3px; background: #d0d0d0; }
```
